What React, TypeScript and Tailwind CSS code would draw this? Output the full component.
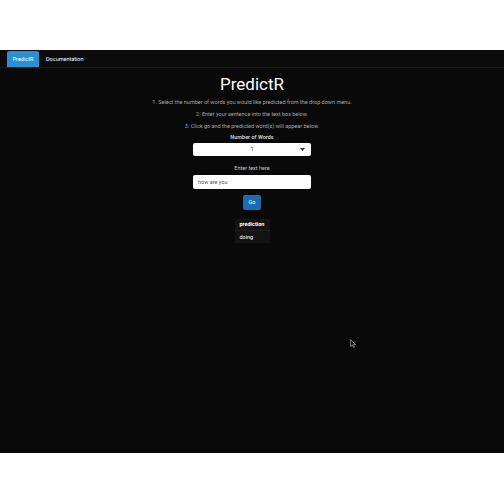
export default function App() {
  return (
    <div className="w-[504px] h-[504px] bg-white" style={{ fontFamily: "Roboto, 'Liberation Sans', sans-serif" }}>
      <div className="h-[50px]" />
      <div className="relative h-[403px] bg-[#090909] text-[#d0d0d0]">
        <div className="flex h-[18px] items-end gap-0 border-b border-[#1c1c1c] bg-[#0b0b0b] px-[7px]">
          <div className="flex h-[16px] w-[32px] items-center justify-center rounded-t-[2px] bg-[#2b8fd1] text-[5.5px] text-white">PredictR</div>
          <div className="flex h-[16px] items-center px-[7px] text-[5.5px] text-white">Documentation</div>
        </div>
        <div className="flex flex-col items-center">
          <h1 className="mt-[6px] text-[17px] leading-[20px] text-white">PredictR</h1>
          <p className="mt-[4px] text-[5.5px] leading-[8px] text-[#a8a8a8]">1. Select the number of words you would like predicted from the drop down menu.</p>
          <p className="mt-[4px] text-[5.5px] leading-[8px] text-[#a8a8a8]">2. Enter your sentence into the text box below.</p>
          <p className="mt-[4px] text-[5.5px] leading-[8px] text-[#a8a8a8]">3. Click go and the predicted word(s) will appear below.</p>
          <div className="mt-[3px] text-[5.5px] font-bold leading-[8px] text-[#c8c8c8]">Number of Words</div>
          <div className="relative mt-[2px] flex h-[13px] w-[118px] items-center justify-center rounded-[2px] bg-white text-[5.5px] text-[#333]">
            1
            <svg className="absolute right-[6px] top-[5px]" width="5" height="3" viewBox="0 0 5 3"><path d="M0 0h5L2.5 3z" fill="#333" /></svg>
          </div>
          <div className="mt-[8px] text-[5.5px] leading-[8px] text-[#c8c8c8]">Enter text here</div>
          <div className="mt-[3px] flex h-[14px] w-[118px] items-center rounded-[2px] bg-white px-[5px] text-[5.5px] text-[#555]">how are you</div>
          <button className="mt-[6px] flex h-[15px] w-[18px] items-center justify-center rounded-[2px] border border-[#2a6aa0] bg-[#1e6bb0] text-[5.5px] text-white">Go</button>
          <div className="mt-[9px] w-[35px] bg-[#131313] text-[5.5px] text-white">
            <div className="flex h-[12px] items-center border-b border-[#1f1f1f] px-[5px] font-bold">prediction</div>
            <div className="flex h-[12px] items-center px-[5px]">doing</div>
          </div>
        </div>
        <svg className="absolute left-[350px] top-[289px]" width="6" height="9" viewBox="0 0 6 9">
          <path d="M0.5 0.5v7l1.8-1.6 1.2 2.6 1-0.5-1.2-2.5h2.2z" fill="#111" stroke="#bbb" strokeWidth="0.6" />
        </svg>
      </div>
    </div>
  );
}
